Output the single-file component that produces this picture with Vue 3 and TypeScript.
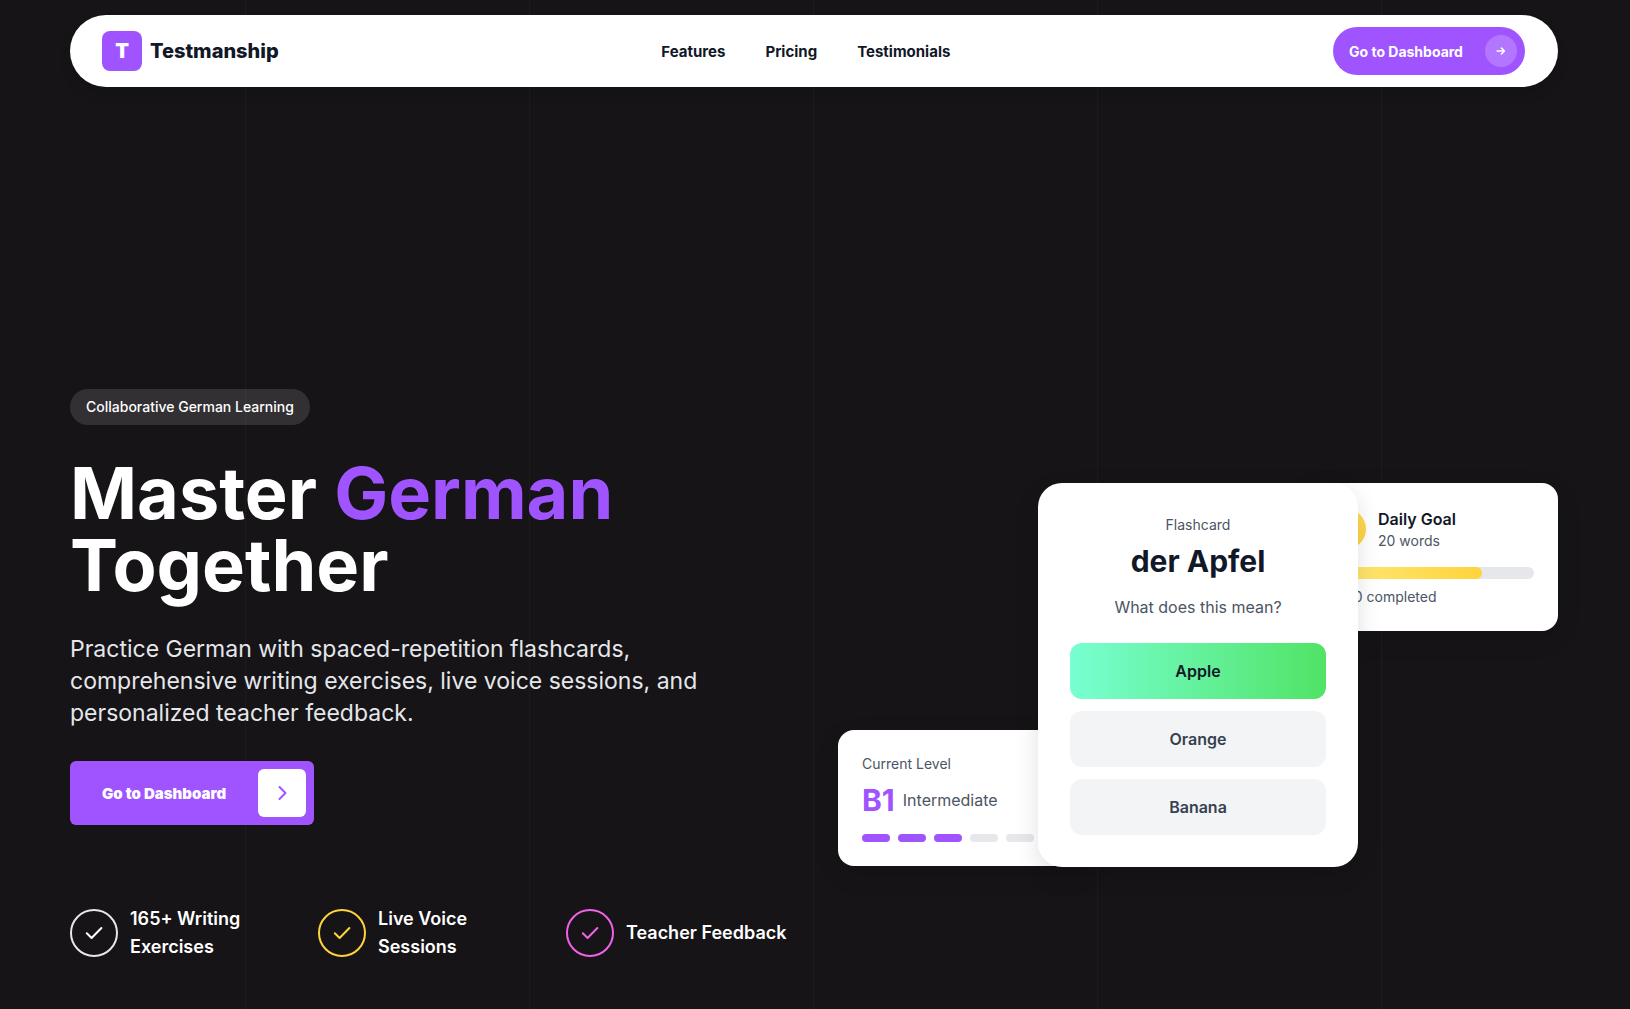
<script setup lang="ts">
interface Perk {
  label: string
  tone: string
}

const links: string[] = ['Features', 'Pricing', 'Testimonials']

const perks: Perk[] = [
  { label: '165+ Writing Exercises', tone: 'light' },
  { label: 'Live Voice Sessions', tone: 'gold' },
  { label: 'Teacher Feedback', tone: 'pink' },
]

const answers: string[] = ['Apple', 'Orange', 'Banana']
const correct = 'Apple'

const goal = { done: 15, total: 20 }
const levelSteps = 5
const levelReached = 3
</script>

<template>
  <div class="page">
    <header class="nav">
      <a class="brand" href="#">
        <span class="brand-mark">T</span>
        <span class="brand-name">Testmanship</span>
      </a>
      <nav class="links">
        <a v-for="link in links" :key="link" :href="'#' + link.toLowerCase()">{{ link }}</a>
      </nav>
      <button class="nav-cta" type="button">
        Go to Dashboard
        <span class="nav-cta-icon">
          <svg width="10" height="10" viewBox="0 0 10 10" fill="none" stroke="currentColor" stroke-width="1.6" stroke-linecap="round" stroke-linejoin="round">
            <path d="M1.2 5h7M5.4 2L8.4 5l-3 3" />
          </svg>
        </span>
      </button>
    </header>

    <main class="hero">
      <section class="intro">
        <span class="badge">Collaborative German Learning</span>
        <h1>Master <span class="accent">German</span> Together</h1>
        <p class="lead">
          Practice German with spaced-repetition flashcards, comprehensive writing exercises, live
          voice sessions, and personalized teacher feedback.
        </p>
        <button class="cta" type="button">
          Go to Dashboard
          <span class="cta-icon">
            <svg width="24" height="24" viewBox="0 0 24 24" fill="none" stroke="currentColor" stroke-width="2" stroke-linecap="round" stroke-linejoin="round">
              <path d="M9.5 6l6 6-6 6" />
            </svg>
          </span>
        </button>
        <ul class="perks">
          <li v-for="perk in perks" :key="perk.label">
            <span class="tick" :class="perk.tone">
              <svg width="20" height="20" viewBox="0 0 20 20" fill="none" stroke="currentColor" stroke-width="2" stroke-linecap="round" stroke-linejoin="round">
                <path d="M2.8 10.2l4.8 4.8L17.4 5" />
              </svg>
            </span>
            <span>{{ perk.label }}</span>
          </li>
        </ul>
      </section>

      <section class="stage">
        <article class="card goal">
          <div class="goal-head">
            <span class="coin"></span>
            <div>
              <div class="goal-title">Daily Goal</div>
              <div class="small">{{ goal.total }} words</div>
            </div>
          </div>
          <div class="track">
            <div class="fill" :style="{ width: (goal.done / goal.total) * 100 + '%' }"></div>
          </div>
          <div class="small">{{ goal.done }}/{{ goal.total }} completed</div>
        </article>

        <article class="card level">
          <div class="small">Current Level</div>
          <div class="level-row">
            <span class="level-code">B1</span>
            <span class="level-name">Intermediate</span>
          </div>
          <div class="steps">
            <span v-for="n in levelSteps" :key="n" class="step" :class="{ on: n <= levelReached }"></span>
          </div>
        </article>

        <article class="card flash">
          <div class="small">Flashcard</div>
          <h2>der Apfel</h2>
          <p>What does this mean?</p>
          <div class="answers">
            <button v-for="a in answers" :key="a" type="button" :class="{ right: a === correct }">{{ a }}</button>
          </div>
        </article>
      </section>
    </main>
  </div>
</template>

<style>
body {
  margin: 0;
  background: #161417;
}
</style>

<style scoped>
.page {
  box-sizing: border-box;
  min-height: 100vh;
  padding: 15px 72px 48px 70px;
  font-family: Inter, "Liberation Sans", sans-serif;
  color: #fff;
  background-color: #161417;
  background-image: linear-gradient(90deg, transparent 283px, #1d1b1e 283px);
  background-size: 284px 100%;
  background-position: -38px 0;
}

button {
  border: 0;
  padding: 0;
  font: inherit;
  color: inherit;
  cursor: pointer;
}

a {
  color: inherit;
  text-decoration: none;
}

h1,
h2,
p,
ul {
  margin: 0;
  padding: 0;
}

.nav {
  display: flex;
  justify-content: space-between;
  align-items: center;
  height: 72px;
  padding: 0 33px 0 32px;
  border-radius: 36px;
  background: #fff;
  color: #111827;
  box-shadow: 0 8px 12px rgba(0, 0, 0, 0.1);
}

.brand {
  display: flex;
  align-items: center;
  gap: 8px;
  font-size: 20px;
  font-weight: 900;
}

.brand-mark {
  display: grid;
  place-items: center;
  width: 40px;
  height: 40px;
  border-radius: 8px;
  background: #a054ff;
  color: #fff;
}

.brand-name {
  font-weight: 800;
}

.links {
  display: flex;
  gap: 40px;
  font-size: 15px;
  font-weight: 700;
}

.nav-cta {
  display: flex;
  align-items: center;
  justify-content: space-between;
  width: 192px;
  height: 48px;
  padding: 0 8px 0 16px;
  box-sizing: border-box;
  border-radius: 24px;
  background: #a054ff;
  color: #fff;
  font-size: 14px;
  font-weight: 700;
}

.nav-cta-icon {
  display: grid;
  place-items: center;
  width: 32px;
  height: 32px;
  border-radius: 50%;
  background: rgba(255, 255, 255, 0.2);
}

.hero {
  display: grid;
  grid-template-columns: 1fr 1fr;
  gap: 48px;
  align-items: center;
  padding-top: 302px;
}

.intro {
  display: flex;
  flex-direction: column;
  align-items: flex-start;
}

.badge {
  padding: 8px 16px;
  border-radius: 18px;
  background: rgba(255, 255, 255, 0.12);
  font-size: 14px;
  line-height: 20px;
  font-weight: 500;
  color: #fff;
}

h1 {
  margin-top: 32px;
  font-size: 72px;
  line-height: 72px;
  font-weight: 700;
}

.accent {
  color: #a054ff;
}

.lead {
  margin-top: 32px;
  font-size: 23px;
  line-height: 32px;
  color: #e5e7eb;
}

.cta {
  display: flex;
  align-items: center;
  justify-content: space-between;
  width: 244px;
  height: 64px;
  margin-top: 32px;
  padding: 0 8px 0 32px;
  box-sizing: border-box;
  border-radius: 6px;
  background: #a054ff;
  font-size: 15px;
  font-weight: 900;
}

.cta-icon {
  display: grid;
  place-items: center;
  width: 48px;
  height: 48px;
  border-radius: 6px;
  background: #fff;
  color: #a054ff;
}

.perks {
  display: grid;
  grid-template-columns: repeat(3, 1fr);
  gap: 24px;
  align-self: stretch;
  margin-top: 80px;
  list-style: none;
  font-size: 18px;
  line-height: 28px;
  font-weight: 600;
}

.perks li {
  display: flex;
  align-items: center;
  gap: 12px;
}

.tick {
  display: grid;
  place-items: center;
  flex: none;
  box-sizing: border-box;
  width: 48px;
  height: 48px;
  border: 2px solid;
  border-radius: 50%;
}

.light {
  border-color: #e5e7eb;
  color: #fff;
}

.gold {
  color: #ffd43b;
}

.pink {
  color: #f062e8;
}

.stage {
  display: grid;
}

.card {
  grid-area: 1 / 1;
  box-sizing: border-box;
  padding: 24px;
  border-radius: 16px;
  background: #fff;
  color: #111827;
  box-shadow: 0 8px 24px rgba(0, 0, 0, 0.12);
}

.small {
  font-size: 14px;
  line-height: 20px;
  color: #4b5563;
}

.goal {
  place-self: start end;
  width: 256px;
}

.goal-head {
  display: flex;
  align-items: center;
  gap: 12px;
}

.coin {
  width: 40px;
  height: 40px;
  border-radius: 50%;
  background: linear-gradient(135deg, #ffe574, #ffd03a);
}

.goal-title {
  font-size: 16px;
  line-height: 24px;
  font-weight: 600;
}

.track {
  height: 12px;
  margin: 16px 0 8px;
  border-radius: 6px;
  background: #e5e7eb;
}

.fill {
  height: 12px;
  border-radius: 6px;
  background: linear-gradient(90deg, #ffe97a, #ffd43b);
}

.level {
  place-self: end start;
  width: 256px;
  margin-bottom: 1px;
}

.level-row {
  display: flex;
  align-items: center;
  gap: 8px;
  margin: 8px 0 16px;
}

.level-code {
  font-size: 30px;
  line-height: 36px;
  font-weight: 700;
  color: #a054ff;
}

.level-name {
  font-size: 16px;
  line-height: 24px;
  color: #4b5563;
}

.steps {
  display: flex;
  gap: 8px;
}

.step {
  width: 28px;
  height: 8px;
  border-radius: 4px;
  background: #e5e7eb;
}

.step.on {
  background: #a054ff;
}

.flash {
  place-self: center;
  width: 320px;
  padding: 32px;
  border-radius: 24px;
  text-align: center;
}

.flash h2 {
  margin: 8px 0 16px;
  font-size: 30px;
  line-height: 36px;
  font-weight: 700;
}

.flash p {
  font-size: 16px;
  line-height: 24px;
  color: #4b5563;
}

.answers {
  display: flex;
  flex-direction: column;
  gap: 12px;
  margin-top: 24px;
}

.answers button {
  height: 56px;
  border-radius: 12px;
  background: #f3f4f6;
  font-size: 16px;
  font-weight: 600;
  color: #374151;
}

.answers .right {
  background: linear-gradient(90deg, #78ffd2, #50e365);
  color: #111827;
}
</style>
